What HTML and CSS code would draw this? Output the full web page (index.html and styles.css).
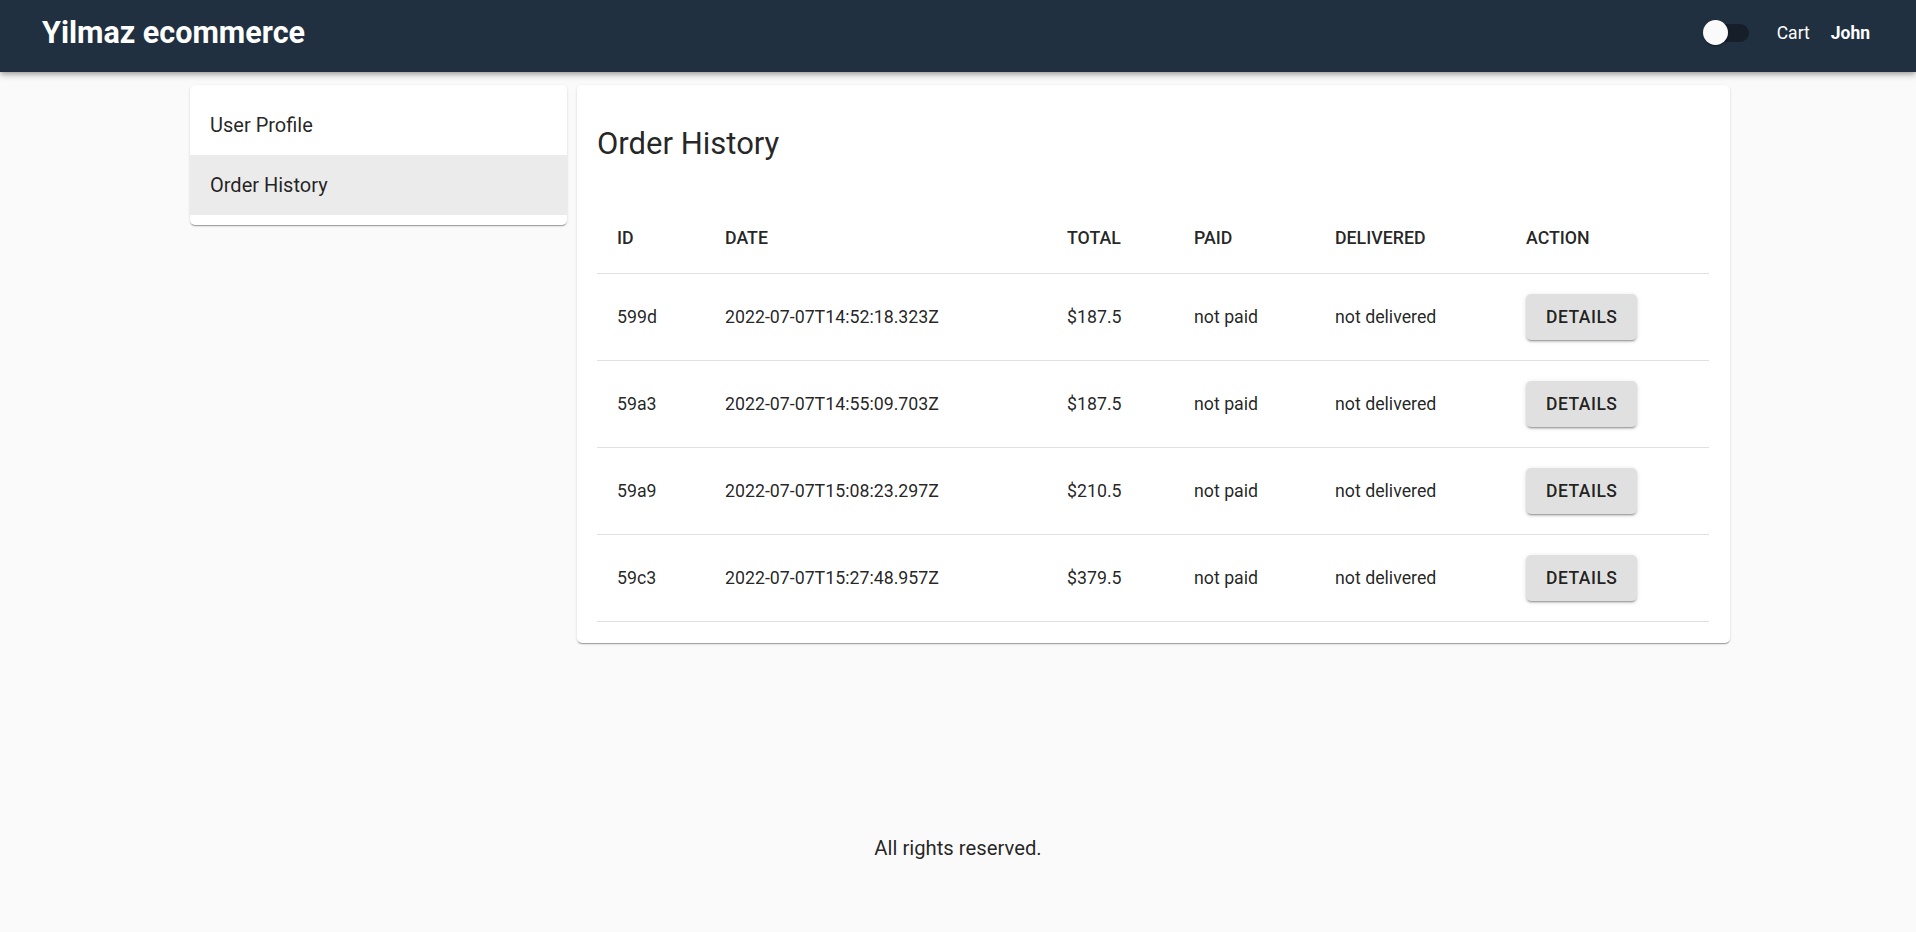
FILE: index.html
```html
<!DOCTYPE html>
<html lang="en">
<head>
<meta charset="utf-8">
<title>Order History</title>
<link rel="stylesheet" href="styles.css">
</head>
<body>
<header class="appbar">
  <a class="brand" href="#">Yilmaz ecommerce</a>
  <div class="grow"></div>
  <span class="switch" role="switch" aria-checked="false">
    <span class="track"></span>
    <span class="thumb"></span>
  </span>
  <a class="nav-link" href="#">Cart</a>
  <a class="nav-link user" href="#">John</a>
</header>

<main class="layout">
  <nav class="card side">
    <a class="side-item" href="#">User Profile</a>
    <a class="side-item selected" href="#">Order History</a>
  </nav>

  <section class="card content">
    <h1 class="title">Order History</h1>
    <table class="orders">
      <colgroup>
        <col class="c-id"><col class="c-date"><col class="c-total"><col class="c-paid"><col class="c-deliv"><col class="c-action">
      </colgroup>
      <thead>
        <tr><th>ID</th><th>DATE</th><th>TOTAL</th><th>PAID</th><th>DELIVERED</th><th>ACTION</th></tr>
      </thead>
      <tbody>
        <tr><td>599d</td><td>2022-07-07T14:52:18.323Z</td><td>$187.5</td><td>not paid</td><td>not delivered</td><td><button class="btn">Details</button></td></tr>
        <tr><td>59a3</td><td>2022-07-07T14:55:09.703Z</td><td>$187.5</td><td>not paid</td><td>not delivered</td><td><button class="btn">Details</button></td></tr>
        <tr><td>59a9</td><td>2022-07-07T15:08:23.297Z</td><td>$210.5</td><td>not paid</td><td>not delivered</td><td><button class="btn">Details</button></td></tr>
        <tr><td>59c3</td><td>2022-07-07T15:27:48.957Z</td><td>$379.5</td><td>not paid</td><td>not delivered</td><td><button class="btn">Details</button></td></tr>
      </tbody>
    </table>
  </section>
</main>

<footer class="footer">All rights reserved.</footer>
</body>
</html>
```

FILE: styles.css
```css
* { box-sizing: border-box; }

html, body {
  margin: 0;
  padding: 0;
}

body {
  min-height: 100vh;
  display: flex;
  flex-direction: column;
  background: #fafafa;
  color: rgba(0, 0, 0, 0.87);
  font-family: Roboto, "Liberation Sans", Arial, sans-serif;
}

a { text-decoration: none; color: inherit; }

/* ---------- App bar ---------- */
.appbar {
  height: 72px;
  padding: 0 46px 7px 42px;
  display: flex;
  align-items: center;
  background: #203040;
  color: #ffffff;
  box-shadow: 0 2px 4px -1px rgba(0,0,0,.2), 0 4px 5px 0 rgba(0,0,0,.14), 0 1px 10px 0 rgba(0,0,0,.12);
  position: relative;
  z-index: 2;
}

.brand {
  font-size: 30.5px;
  font-weight: 700;
  line-height: 36px;
  color: #ffffff;
}

.grow { flex: 1; }

.switch {
  position: relative;
  width: 47px;
  height: 25px;
  margin-right: 27px;
  display: flex;
  align-items: center;
}

.track {
  display: block;
  width: 46px;
  height: 18px;
  border-radius: 9px;
  background: #151e29;
}

.thumb {
  position: absolute;
  left: 0;
  top: 0;
  width: 25px;
  height: 25px;
  border-radius: 50%;
  background: #fafafa;
  box-shadow: 0 2px 1px -1px rgba(0,0,0,.2), 0 1px 1px 0 rgba(0,0,0,.14), 0 1px 3px 0 rgba(0,0,0,.12);
}

.nav-link {
  font-size: 17.5px;
  line-height: 26px;
  color: #ffffff;
}

.nav-link.user {
  margin-left: 21px;
  font-weight: 700;
}

/* ---------- Layout ---------- */
.layout {
  flex: 1;
  display: grid;
  grid-template-columns: 377px 1153px;
  column-gap: 10px;
  align-items: start;
  margin: 13px 0 0 190px;
}

.card {
  background: #ffffff;
  border-radius: 5px;
  box-shadow: 0 2px 1px -1px rgba(0,0,0,.2), 0 1px 1px 0 rgba(0,0,0,.14), 0 1px 3px 0 rgba(0,0,0,.12);
}

/* ---------- Sidebar ---------- */
.side {
  padding: 10px 0;
  display: flex;
  flex-direction: column;
}

.side-item {
  height: 60px;
  padding: 0 20px;
  display: flex;
  align-items: center;
  font-size: 20px;
  line-height: 30px;
  color: rgba(0, 0, 0, 0.87);
}

.side-item.selected {
  background: #ebebeb;
}

/* ---------- Content ---------- */
.content {
  padding: 20px 20px 21px;
}

.title {
  margin: 19px 0 39px;
  font-size: 31px;
  line-height: 40px;
  font-weight: 400;
  color: rgba(0, 0, 0, 0.87);
}

.orders {
  width: 1112px;
  border-collapse: collapse;
  table-layout: fixed;
}

.c-id { width: 108px; }
.c-date { width: 342px; }
.c-total { width: 127px; }
.c-paid { width: 141px; }
.c-deliv { width: 191px; }
.c-action { width: 203px; }

.orders th,
.orders td {
  padding: 20px;
  text-align: left;
  font-size: 17.75px;
  line-height: 30px;
  border-bottom: 1px solid #e0e0e0;
  color: rgba(0, 0, 0, 0.87);
  vertical-align: middle;
  white-space: nowrap;
}

.orders th {
  font-weight: 500;
}

.orders td {
  font-weight: 400;
}

.btn {
  width: 111px;
  height: 46px;
  padding: 0 20px;
  border: 0;
  border-radius: 5px;
  background: #e0e0e0;
  color: rgba(0, 0, 0, 0.87);
  font-family: Roboto, "Liberation Sans", Arial, sans-serif;
  font-size: 17.5px;
  font-weight: 500;
  letter-spacing: 0.5px;
  text-transform: uppercase;
  display: block;
  box-shadow: 0 3px 1px -2px rgba(0,0,0,.2), 0 2px 2px 0 rgba(0,0,0,.14), 0 1px 5px 0 rgba(0,0,0,.12);
}

/* ---------- Footer ---------- */
.footer {
  padding-bottom: 69px;
  text-align: center;
  font-size: 20.25px;
  line-height: 30px;
  color: rgba(0, 0, 0, 0.87);
}
```
